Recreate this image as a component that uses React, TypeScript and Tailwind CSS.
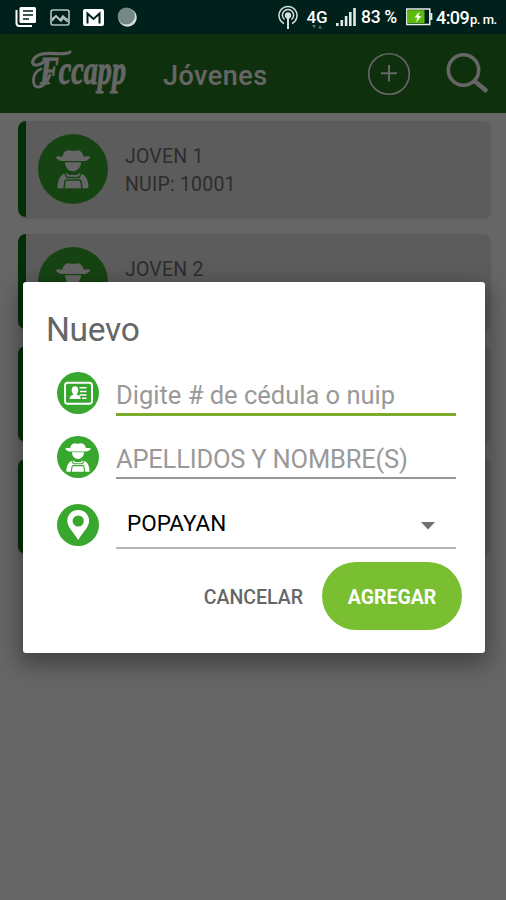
import React from 'react';
import { clsx } from 'clsx';

type Youth = { id: number; name?: string; nuip?: string };

const YOUTHS: Youth[] = [
  { id: 1, name: 'JOVEN 1', nuip: '10001' },
  { id: 2, name: 'JOVEN 2' },
  { id: 3 },
  { id: 4 },
];

function FarmerIcon({ className, viewBox = '0 0 70 70' }: { className?: string; viewBox?: string }) {
  return (
    <svg viewBox={viewBox} className={clsx('shrink-0 rounded-full bg-[#38a72d]', className)}>
      <g fill="#fff">
        <path d="M24.500 22.500c.8-3.500 2.500-6 6-6.300c2 .7 6 .7 9 0c3.500.3 5.200 2.800 6 6.300c2.500.4 5-.7 6.200.2c1 1.300-1.200 3.300-5 4.300H23.500c-4-1-6-3-5-4.300c1.200-.9 3.500.2 6-.2z" />
        <path d="M27 28.300h16c0 5.200-3.500 8.900-8 8.900s-8-3.700-8-8.900z" />
        <path d="M28 39c-5.500 1.500-8.500 6.500-8.500 15.300h31c0-8.800-3-13.800-8.500-15.300l-3.500 2h-7z" />
      </g>
      <g fill="none" stroke="#38a72d" strokeWidth="1.500">
        <path d="M26.500 39l2.500 4.500h12L43.500 39" />
        <path d="M26 55l1-7.500q.3-1.500 1.800-1.500h12.400q1.500 0 1.800 1.500l1 7.500" />
      </g>
    </svg>
  );
}

function IdCardIcon() {
  return (
    <svg viewBox="0 0 42 42" className="size-[42px] shrink-0">
      <circle cx="21" cy="21" r="21" fill="#38a72d" />
      <rect x="8" y="10.700" width="27" height="21" rx="2.800" fill="none" stroke="#fff" strokeWidth="1.900" />
      <g fill="#fff">
        <ellipse cx="18" cy="18.300" rx="3.300" ry="4" />
        <path d="M16.300 20.500h3.400v2.300c2.600.5 4 1.500 4 4.200h-11c0-2.700 1.500-3.700 3.600-4.200z" />
        <path d="M22.500 15h7v1.500h-7zM23 18.700h6.500v1.500h-6.500zM22.500 22.200h7v1.500h-7zM25 25.500h4.500v1.500h-4.500z" />
      </g>
    </svg>
  );
}

function PinIcon() {
  return (
    <svg viewBox="0 0 42 42" className="size-[42px] shrink-0">
      <circle cx="21" cy="21" r="21" fill="#38a72d" />
      <path fill="#fff" d="M21.200 6c-6.200 0-10.900 4.700-10.900 10.700c0 6.500 6.500 11.500 10.900 19.300c4.400-7.800 10.900-12.800 10.900-19.300c0-6-4.700-10.700-10.900-10.700z" />
      <circle cx="21.200" cy="17" r="5.600" fill="#38a72d" />
    </svg>
  );
}

function StatusBar() {
  return (
    <div className="relative z-20 flex h-[34px] items-center justify-between bg-[#00211b] pl-[15px] pr-[10px] text-white">
      <div className="flex items-center gap-[14px]">
        <svg viewBox="0 0 22 22" className="size-[22px]">
          <path d="M1.500 4v13q0 3 3 3H17" fill="none" stroke="#fff" strokeWidth="2" />
          <rect x="4.500" y="1" width="16.500" height="16" rx="1.500" fill="#fff" />
          <path d="M8 5h10M8 9h10M8 13h6" stroke="#00211b" strokeWidth="1.600" />
        </svg>
        <svg viewBox="0 0 20 17" className="-ml-px h-[17px] w-5" fill="none" stroke="#b4c4bf" strokeWidth="1.600">
          <rect x="1" y="1" width="18" height="15" rx="2" />
          <path d="M2 12l4-5 4 4 3-4 2 2 3 2" />
          <path d="M2 10l4-3 5 5 2-3 5 4" />
        </svg>
        <svg viewBox="0 0 21 17" className="-ml-px h-[17px] w-[21px]">
          <rect width="21" height="17" rx="2" fill="#fff" />
          <path d="M4.500 14.500V4.500l6 5.500 6-5.500v10" fill="none" stroke="#00211b" strokeWidth="2" />
        </svg>
        <svg viewBox="0 0 20 20" className="-ml-px size-5">
          <circle cx="10.500" cy="10.500" r="9.300" fill="#d3dfdb" />
          <circle cx="9.300" cy="9" r="8.600" fill="#758883" />
        </svg>
      </div>
      <div className="flex items-center font-[Roboto,sans-serif] leading-none">
        <svg viewBox="0 0 20 24" className="h-6 w-5" fill="none" stroke="#d5dfdc" strokeWidth="1.500">
          <path d="M6 18.500a9 9 0 1 1 8 0" />
          <path d="M6.500 14.500a5.600 5.600 0 1 1 7 0" />
          <circle cx="10" cy="10.500" r="2.400" fill="#d5dfdc" />
          <path d="M10 12v12" strokeWidth="2" />
        </svg>
        <div className="ml-2 flex w-[22px] flex-col items-center pt-1">
          <span className="text-[17px] font-medium leading-[16px]">4G</span>
          <svg viewBox="0 0 10 4" className="h-1 w-2.5" fill="#53716a">
            <path d="M0 0h4l-2 3.500zM6 3.500h4l-2-3.500z" />
          </svg>
        </div>
        <svg viewBox="0 0 20 18" className="ml-2 h-[18px] w-5" fill="#e3ebe8">
          <path d="M0 15h2.600v3H0zM4.500 12h2.600v6H4.500zM8.800 8h2.600v10H8.800zM13 4h2.600v14H13zM17.200 0h2.600v18h-2.600z" />
        </svg>
        <span className="ml-[5px] w-[37px] whitespace-nowrap pt-[2px] text-[17.500px] font-medium tracking-[-0.3px]">83 %</span>
        <svg viewBox="0 0 27 18" className="ml-[8px] h-[18px] w-[27px]">
          <rect x="0.800" y="1" width="23" height="15.500" fill="#00211b" stroke="#e6eee8" strokeWidth="1.500" />
          <rect x="2" y="2.200" width="16.500" height="13" fill="#5ebd0c" />
          <rect x="24.300" y="5" width="2" height="7" fill="#e6eee8" />
          <path d="M13.500 3.500L8.500 9.500h3l-1.500 5 5.500-6.500h-3z" fill="#fff" />
        </svg>
        <span className="ml-[3px] w-[34px] pt-[2px] text-[18px] font-medium tracking-[-0.6px]">4:09</span>
        <span className="w-[26px] whitespace-nowrap pt-1 text-[13px] font-medium tracking-[-0.5px]">p. m.</span>
      </div>
    </div>
  );
}

function Logo() {
  return (
    <svg viewBox="0 0 97 60" className="h-[60px] w-[97px] shrink-0 overflow-visible" fill="#fff" stroke="#fff" strokeLinecap="round" strokeLinejoin="round">
      {/* swashes around the capital */}
      <path d="M39 8C34 12 22 8 11 10C2 12-1 20 4 21c4 .5 8-2 9-4" fill="none" strokeWidth="3.200" />
      <path d="M10 25c-9 3-10 18-3 18c5 0 9-4 12-12" fill="none" strokeWidth="2.800" />
      <text x="9" y="40" textLength="86" lengthAdjust="spacingAndGlyphs" strokeWidth="0.900" className="font-['Liberation_Serif',serif] text-[41px] font-bold italic">
        Fccapp
      </text>
    </svg>
  );
}

function Header() {
  return (
    <header className="flex h-[79px] items-center bg-[#267821] pl-[31px] text-white">
      <Logo />
      <h1 className="ml-[35px] flex-1 pt-[5px] text-[27px] font-medium leading-none tracking-[0.5px]">Jóvenes</h1>
      <svg viewBox="0 0 44 44" className="size-11" fill="none" stroke="#fff">
        <circle cx="22" cy="22" r="20.300" strokeWidth="1.600" />
        <path d="M14 21.200h16M22 13v16.500" strokeWidth="2" />
      </svg>
      <svg viewBox="0 0 46 42" className="ml-[33px] mr-[16px] h-[42px] w-[46px]" fill="none" stroke="#fff">
        <circle cx="19.500" cy="17" r="15.200" strokeWidth="3.600" />
        <path d="M30 27.500L43 38.500" strokeWidth="4.400" />
      </svg>
    </header>
  );
}

function NewYouthDialog() {
  return (
    <div className="h-[371px] w-[462px] rounded-[3px] bg-white shadow-[0_8px_22px_4px_rgba(0,0,0,0.35)]">
      <h2 className="pl-[23px] pt-[28px] text-[33.500px] leading-[40px] tracking-[-0.3px] text-[#666]">Nuevo</h2>
      <div className="pl-[34px] pr-[29px]">
        <div className="mt-[22px] flex h-[64px] gap-[17px]">
          <IdCardIcon />
          <div className="h-[44px] flex-1 border-b-[3px] border-[#7cab2c] pt-[8px] text-[25.500px] leading-[30px] text-[#999]">
            Digite # de cédula o nuip
          </div>
        </div>
        <div className="flex h-[68px] gap-[17px]">
          <FarmerIcon className="size-[42px]" viewBox="7 6.500 56 56" />
          <div className="h-[43px] flex-1 border-b-2 border-[#969696] pt-[8px] text-[25.500px] leading-[30px] tracking-[-0.200px] text-[#999]">
            APELLIDOS Y NOMBRE(S)
          </div>
        </div>
        <div className="flex h-[58px] gap-[17px]">
          <PinIcon />
          <div className="flex h-[45px] flex-1 justify-between border-b-2 border-[#b5b5b5] pl-[11px] pr-[21px] text-[22.500px] leading-[38px] text-black">
            <span>POPAYAN</span>
            <svg viewBox="0 0 14 8" className="mt-[18px] h-2 w-3.5" fill="#707070">
              <path d="M0 0h14l-7 7.500z" />
            </svg>
          </div>
        </div>
      </div>
      <div className="flex items-center justify-end pr-[23px] text-[19.500px]">
        <button className="mr-[19px] pt-[3px] font-medium text-[#666]">CANCELAR</button>
        <button className="h-[68px] w-[140px] rounded-full bg-[#7abf31] pt-[3px] font-bold text-white">AGREGAR</button>
      </div>
    </div>
  );
}

export default function App() {
  return (
    <div className="relative h-[900px] w-[506px] overflow-hidden bg-white font-[Roboto,sans-serif]">
      <StatusBar />
      <Header />
      <main className="flex flex-col gap-[17px] pl-[18px] pr-[15px] pt-2">
        {YOUTHS.map((youth) => (
          <div key={youth.id} className="flex h-[95.500px] rounded-lg border-l-8 border-[#08750f] bg-[#e6e6e6] pl-3 pt-[13px] shadow-[0_2px_2px_rgba(0,0,0,0.12)]">
            <FarmerIcon className="size-[70px]" />
            <div className="ml-[17px] pt-[9px] text-[19.500px] leading-[28px] tracking-[0.2px] text-[#707070]">
              {youth.name && <p>{youth.name}</p>}
              {youth.nuip && <p>NUIP: {youth.nuip}</p>}
            </div>
          </div>
        ))}
      </main>
      <div className="absolute inset-0 z-10 bg-black/60 pl-[23px] pt-[282px]">
        <NewYouthDialog />
      </div>
    </div>
  );
}
